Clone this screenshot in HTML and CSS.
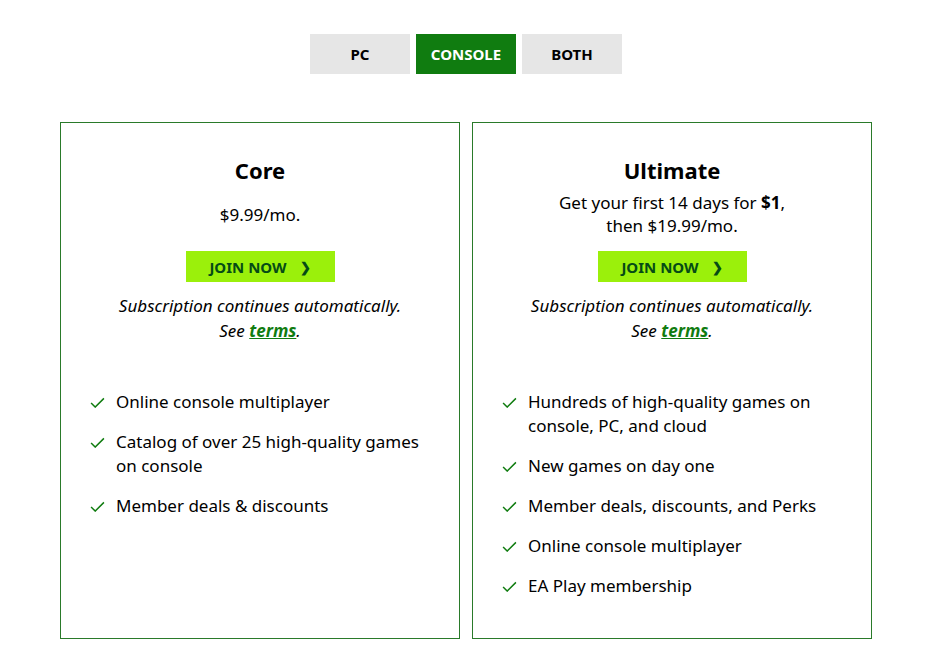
FILE: index.html
```html
<!DOCTYPE html>
<html lang="en">
<head>
<meta charset="utf-8">
<title>Xbox Game Pass plans</title>
<link rel="stylesheet" href="styles.css">
</head>
<body>
<main class="page">
  <div class="tabs">
    <button class="tab">PC</button>
    <button class="tab tab-active">CONSOLE</button>
    <button class="tab">BOTH</button>
  </div>
  <div class="cards">
    <section class="card">
      <h2 class="card-title">Core</h2>
      <div class="price"><p>$9.99/mo.</p></div>
      <a class="join" href="#">JOIN NOW <span class="chev">&#x276F;</span></a>
      <p class="note">Subscription continues automatically.<br>See <a class="terms" href="#">terms</a>.</p>
      <ul class="features">
        <li><svg class="check" viewBox="0 0 16 12"><path d="M1 6.5 L5.5 11 L15 1.5"/></svg><span>Online console multiplayer</span></li>
        <li><svg class="check" viewBox="0 0 16 12"><path d="M1 6.5 L5.5 11 L15 1.5"/></svg><span>Catalog of over 25 high-quality games on console</span></li>
        <li><svg class="check" viewBox="0 0 16 12"><path d="M1 6.5 L5.5 11 L15 1.5"/></svg><span>Member deals &amp; discounts</span></li>
      </ul>
    </section>
    <section class="card">
      <h2 class="card-title">Ultimate</h2>
      <div class="price"><p>Get your first 14 days for <b>$1</b>,<br>then $19.99/mo.</p></div>
      <a class="join" href="#">JOIN NOW <span class="chev">&#x276F;</span></a>
      <p class="note">Subscription continues automatically.<br>See <a class="terms" href="#">terms</a>.</p>
      <ul class="features">
        <li><svg class="check" viewBox="0 0 16 12"><path d="M1 6.5 L5.5 11 L15 1.5"/></svg><span>Hundreds of high-quality games on console, PC, and cloud</span></li>
        <li><svg class="check" viewBox="0 0 16 12"><path d="M1 6.5 L5.5 11 L15 1.5"/></svg><span>New games on day one</span></li>
        <li><svg class="check" viewBox="0 0 16 12"><path d="M1 6.5 L5.5 11 L15 1.5"/></svg><span>Member deals, discounts, and Perks</span></li>
        <li><svg class="check" viewBox="0 0 16 12"><path d="M1 6.5 L5.5 11 L15 1.5"/></svg><span>Online console multiplayer</span></li>
        <li><svg class="check" viewBox="0 0 16 12"><path d="M1 6.5 L5.5 11 L15 1.5"/></svg><span>EA Play membership</span></li>
      </ul>
    </section>
  </div>
</main>
</body>
</html>
```

FILE: styles.css
```css
* { box-sizing: border-box; }
html, body { margin: 0; padding: 0; background: #fff; }
body {
  font-family: "Noto Sans", "Open Sans", sans-serif;
  color: #000;
  font-size: 17px;
}
.page {
  width: 812px;
  margin: 0 0 0 60px;
  padding-top: 34px;
}
.tabs {
  display: flex;
  justify-content: center;
  gap: 6px;
}
.tab {
  width: 100px;
  height: 40px;
  border: 0;
  background: #e6e6e6;
  font-family: inherit;
  font-weight: 700;
  font-size: 15px;
  color: #000;
  padding: 0;
}
.tab-active { background: #107c10; color: #fff; }
.cards {
  display: grid;
  grid-template-columns: 400px 400px;
  gap: 12px;
  margin-top: 48px;
}
.card {
  border: 1px solid #2a7a2a;
  height: 517px;
  display: flex;
  flex-direction: column;
  align-items: center;
  padding-top: 31px;
}
.card-title {
  margin: 0;
  font-size: 22px;
  line-height: 32px;
  font-weight: 700;
}
.price {
  height: 54px;
  display: flex;
  align-items: center;
  text-align: center;
  margin-top: 1px;
}
.price p { margin: 0; line-height: 23px; }
.join {
  margin-top: 10px;
  width: 149px;
  height: 31px;
  background: #9bf00b;
  color: #054b16;
  text-decoration: none;
  font-weight: 700;
  font-size: 15px;
  display: flex;
  align-items: center;
  justify-content: center;
  gap: 13px;
}
.chev { font-size: 13px; }
.note {
  margin: 11px 0 0;
  font-style: italic;
  text-align: center;
  line-height: 25px;
}
.terms { color: #107c10; font-weight: 700; }
.features {
  list-style: none;
  margin: 47px 0 0;
  padding: 0 30px 0 29px;
  align-self: stretch;
}
.features li {
  display: flex;
  align-items: flex-start;
  gap: 11px;
  line-height: 24px;
  margin-bottom: 16px;
}
.check {
  width: 15px;
  height: 11px;
  flex: none;
  margin-top: 7px;
  fill: none;
  stroke: #107c10;
  stroke-width: 1.6;
}
```
